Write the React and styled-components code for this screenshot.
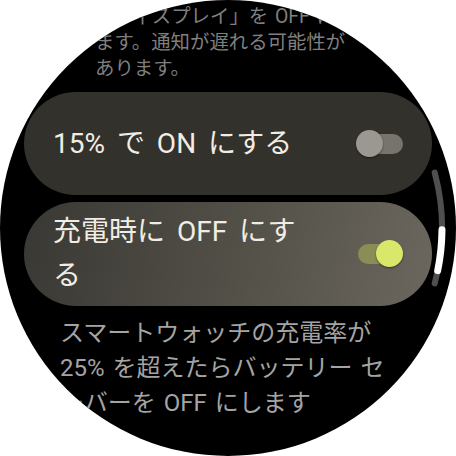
import React from 'react';
import styled, { createGlobalStyle } from 'styled-components';

const GlobalStyle = createGlobalStyle`
    html, body {
        margin: 0;
        padding: 0;
        background: #fff;
    }
    body {
        font-family: Roboto, "Noto Sans CJK JP", sans-serif;
    }
`;

const Watch = styled.div`
    position: relative;
    width: 456px;
    height: 456px;
    border-radius: 50%;
    background: #000;
    overflow: hidden;
`;

const Column = styled.div`
    display: flex;
    flex-direction: column;
    padding-top: 4px;
`;

const Note = styled.div`
    padding-left: ${p => p.indent}px;
    font-size: ${p => p.size}px;
    line-height: ${p => p.lineHeight}px;
    color: ${p => p.color};
    word-spacing: ${p => p.spacing || 0}px;
    white-space: nowrap;
    margin-top: ${p => p.gapTop || 0}px;
`;

const Cards = styled.div`
    display: flex;
    flex-direction: column;
    gap: 7px;
    padding: 0 24px;
    margin-top: 10px;
`;

const Card = styled.div`
    height: ${p => p.height}px;
    border-radius: 52px;
    background: ${p => p.active
        ? 'linear-gradient(100deg, #3a3834 0%, #545149 55%, #6b675e 100%)'
        : '#33312c'};
    display: flex;
    align-items: center;
    justify-content: space-between;
    padding: 0 29px;
    box-sizing: border-box;
`;

const Label = styled.div`
    width: 258px;
    font-size: 28px;
    line-height: 44px;
    word-spacing: 5px;
    color: #f1ede5;
`;

const Toggle = styled.div`
    position: relative;
    width: 47px;
    height: 28px;
    flex-shrink: 0;

    &::before {
        content: '';
        position: absolute;
        left: 2px;
        right: 0;
        top: 4px;
        height: 20px;
        border-radius: 10px;
        background: ${p => p.on ? '#8a8d55' : '#77746d'};
    }

    &::after {
        content: '';
        position: absolute;
        top: 0;
        left: ${p => p.on ? '20px' : '0'};
        width: 27px;
        height: 27px;
        border-radius: 50%;
        background: ${p => p.on ? '#d9e76a' : '#9b9791'};
        box-shadow: 0 1px 2px rgba(0, 0, 0, 0.45);
    }
`;

const Scroll = styled.svg`
    position: absolute;
    left: 0;
    top: 0;
    pointer-events: none;
`;

const arc = (r, a0, a1) => {
    const rad = a => (a * Math.PI) / 180;
    const x0 = 228 + r * Math.cos(rad(a0));
    const y0 = 228 + r * Math.sin(rad(a0));
    const x1 = 228 + r * Math.cos(rad(a1));
    const y1 = 228 + r * Math.sin(rad(a1));
    return `M ${x0} ${y0} A ${r} ${r} 0 0 1 ${x1} ${y1}`;
};

export default function App() {
    return (
        <>
            <GlobalStyle />
            <Watch>
                <Column>
                    <Note indent={95} size={19.4} lineHeight={26} color="#7f7f7f" spacing={2}>
                        「ディスプレイ」を OFF にし<br />
                        ます。通知が遅れる可能性が<br />
                        あります。
                    </Note>
                    <Cards>
                        <Card height={103}>
                            <Label>15% で ON にする</Label>
                            <Toggle />
                        </Card>
                        <Card height={104} active>
                            <Label>充電時に OFF にする</Label>
                            <Toggle on />
                        </Card>
                    </Cards>
                    <Note indent={60} size={24} lineHeight={35} color="#a4a4a4" gapTop={10} spacing={2}>
                        スマートウォッチの充電率が<br />
                        25% を超えたらバッテリー セ<br />
                        ーバーを OFF にします
                    </Note>
                </Column>
                <Scroll width="456" height="456" viewBox="0 0 456 456">
                    <path d={arc(214, -15, 15)} stroke="#4f4f4f" strokeWidth="6" fill="none" strokeLinecap="round" />
                    <path d={arc(214, 0.5, 11.5)} stroke="#ffffff" strokeWidth="7" fill="none" strokeLinecap="round" />
                </Scroll>
            </Watch>
        </>
    );
}
